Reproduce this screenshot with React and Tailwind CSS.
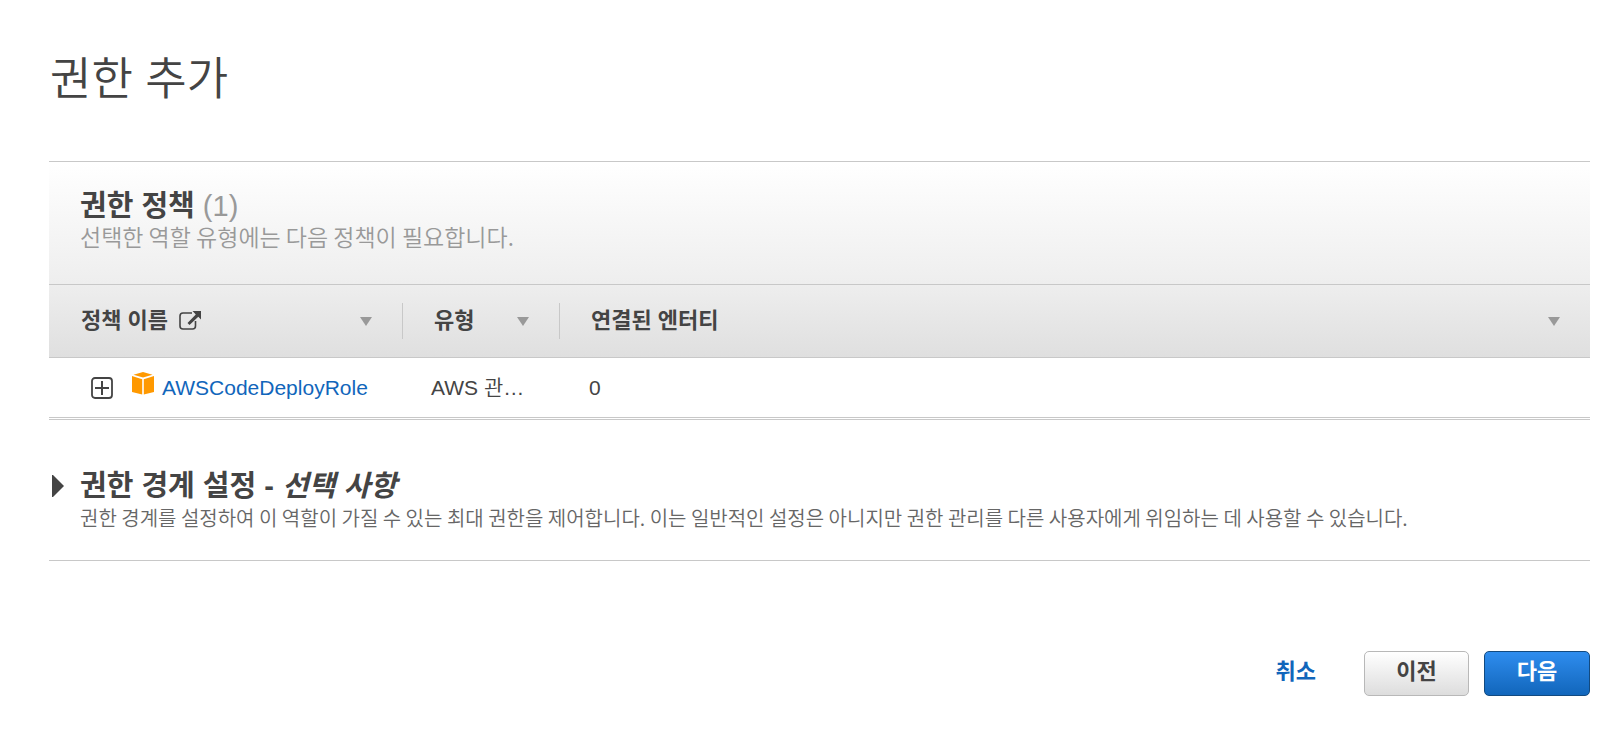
import React, { useState } from 'react';

const policies = [
    { id: 1, name: 'AWSCodeDeployRole', type: 'AWS 관리형', entities: 0 },
];

const ExternalIcon = () => (
    <svg width="22" height="19" viewBox="0 0 22 19" fill="none" aria-hidden="true">
        <path d="M13 2H4A3 3 0 0 0 1 5v10a3 3 0 0 0 3 3h9.500a3 3 0 0 0 3-3v-5" stroke="#444" strokeWidth="1.6" />
        <path d="M13.500 0H22v8.500l-2.700-2.700-8.800 8.200-2-2 8.300-8.500z" fill="#444" />
    </svg>
);

const ExpandIcon = () => (
    <svg width="22" height="22" viewBox="0 0 22 22" fill="none" stroke="#444" aria-hidden="true">
        <rect x="1" y="1" width="20" height="20" rx="3" strokeWidth="1.8" />
        <path d="M11 4v14M4 11h14" strokeWidth="2" />
    </svg>
);

const PolicyIcon = () => (
    <svg width="22" height="23" viewBox="0 0 22 23" fill="#ff9900" aria-hidden="true">
        <path d="M11 0l9.500 2.700L11 5.600 1.500 2.700z" />
        <path d="M0 4l10.200 3.200v15.300L0 20z" />
        <path d="M22 4L11.800 7.200v15.300L22 20z" />
    </svg>
);

const HeaderCell = ({ label, icon, divider, className }) => (
    <th scope="col" className={`h-[74px] p-0 font-bold ${className}`}>
        <div className={`flex h-9 items-center justify-between pr-[30px] ${divider ? 'border-l border-[#c8c8c8] pl-[31px]' : 'pl-8'}`}>
            <span className="flex items-center gap-[11px] pb-0.5 whitespace-nowrap">
                {label}
                {icon}
            </span>
            <button type="button" aria-label={`${label} 정렬`}>
                <svg width="12" height="9" viewBox="0 0 12 9" fill="#999" aria-hidden="true">
                    <path d="M0 0h12L6 9z" />
                </svg>
            </button>
        </div>
    </th>
);

const App = () => {
    const [open, setOpen] = useState(false);

    return (
        <main className="bg-white pt-[47px] pr-[17px] pl-[49px] font-['Liberation_Sans','Noto_Sans_CJK_KR',sans-serif] text-[#444]">
            <h1 className="pl-px text-[45px] leading-[66px] font-[350]">권한 추가</h1>

            <section className="mt-12">
                <div className="h-[123px] border-t border-[#c8c8c8] bg-linear-to-b from-white to-[#eee] px-[31px] pt-7">
                    <h2 className="text-[29px] leading-8 font-bold">
                        권한 정책 <span className="font-normal text-[#999]">({policies.length})</span>
                    </h2>
                    <p className="font-['Noto_Sans_CJK_KR',sans-serif] text-[23px] leading-7 font-[350] text-[#999]">선택한 역할 유형에는 다음 정책이 필요합니다.</p>
                </div>

                <table className="w-full table-fixed border-separate border-spacing-0 border-b-3 border-double border-[#c8c8c8] text-left">
                    <thead className="text-[22px]">
                        <tr className="bg-linear-to-b from-[#eee] to-[#dfdfdf] *:border-y *:border-[#c8c8c8]">
                            <HeaderCell label="정책 이름" icon={<ExternalIcon />} className="w-[353px]" />
                            <HeaderCell label="유형" divider className="w-[157px]" />
                            <HeaderCell label="연결된 엔터티" divider className="" />
                        </tr>
                    </thead>
                    <tbody className="text-[21px]">
                        {policies.map(policy => (
                            <tr key={policy.id}>
                                <td className="h-[59px] py-0 pl-[42px]">
                                    <div className="flex items-center">
                                        <button type="button" aria-label="정책 펼치기">
                                            <ExpandIcon />
                                        </button>
                                        <a href="#policy" className="ml-[19px] flex gap-2 text-[#1166bb]">
                                            <PolicyIcon />
                                            {policy.name}
                                        </a>
                                    </div>
                                </td>
                                <td className="truncate py-0 pr-[29px] pl-[29px] font-[350]">{policy.type}</td>
                                <td className="py-0 pl-[30px]">{policy.entities}</td>
                            </tr>
                        ))}
                    </tbody>
                </table>
            </section>

            <section className="mt-[50px] border-b border-[#c8c8c8] pb-[26px]">
                <h2 className="text-[29px] leading-8 font-bold">
                    <button type="button" aria-expanded={open} onClick={() => setOpen(!open)} className="flex items-center pl-[3px]">
                        <svg width="12" height="22" viewBox="0 0 12 22" fill="#444" className="mr-4" aria-hidden="true">
                            <path d="M0 0h1l11 11L1 22H0z" />
                        </svg>
                        <span>
                            권한 경계 설정 - <em>선택 사항</em>
                        </span>
                    </button>
                </h2>
                <p className="pl-[31px] font-['Noto_Sans_CJK_KR',sans-serif] text-[20px] leading-8 font-[350] text-[#666]">
                    권한 경계를 설정하여 이 역할이 가질 수 있는 최대 권한을 제어합니다. 이는 일반적인 설정은 아니지만 권한 관리를 다른 사용자에게 위임하는 데 사용할 수 있습니다.
                </p>
            </section>

            <footer className="mt-[90px] flex items-center justify-end text-[22px] font-bold">
                <a href="#cancel" className="mr-12 pb-1 text-[#1166bb]">취소</a>
                <button type="button" className="mr-[15px] h-[45px] w-[105px] rounded-[5px] border border-[#b8b8b8] bg-linear-to-b from-white to-[#ddd] pb-1">이전</button>
                <button type="button" className="h-[45px] w-[106px] rounded-[5px] border border-[#124a80] bg-linear-to-b from-[#2e8def] to-[#1166bb] pb-1 text-white">다음</button>
            </footer>
        </main>
    );
};

export default App;
